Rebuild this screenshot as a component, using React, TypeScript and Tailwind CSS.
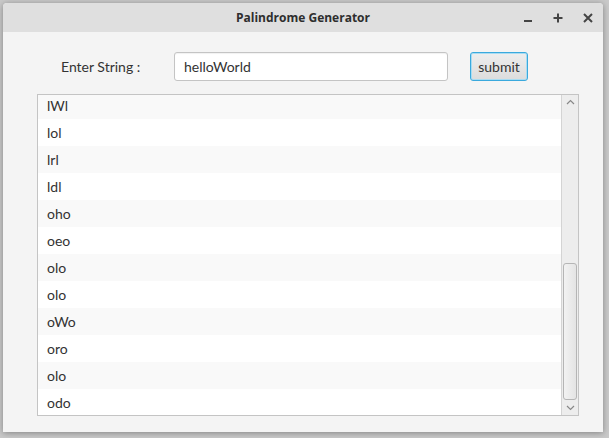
import React from "react";

const items = ["lWl", "lol", "lrl", "ldl", "oho", "oeo", "olo", "olo", "oWo", "oro", "olo", "odo"];

const App: React.FC = () => {
  return (
    <div className="w-[609px] h-[438px] bg-[#c9c9c9] overflow-hidden pt-[3px] pl-[3px]" style={{ fontFamily: "Lato, 'Open Sans', sans-serif" }}>
      <div className="w-[600px] h-[429px] bg-[#f4f4f4] rounded-t-[4px] shadow-[0_1px_6px_rgba(0,0,0,0.35)] flex flex-col">
        {/* title bar */}
        <div className="h-[29px] bg-[#dfdfdf] rounded-t-[4px] flex items-center relative">
          <div className="flex-1 text-center text-[12px] font-bold text-[#2e2e2e]" style={{ fontFamily: "'Open Sans', sans-serif" }}>
            Palindrome Generator
          </div>
          <div className="absolute right-[9px] top-0 h-full flex items-center gap-[18px] text-[#444]">
            <svg width="12" height="12" viewBox="0 0 12 12"><rect x="2" y="8" width="8" height="2" fill="#444" /></svg>
            <svg width="12" height="12" viewBox="0 0 12 12"><path d="M6 1.5v9M1.5 6h9" stroke="#444" strokeWidth="2" /></svg>
            <svg width="12" height="12" viewBox="0 0 12 12"><path d="M2 2l8 8M10 2l-8 8" stroke="#444" strokeWidth="2" /></svg>
          </div>
        </div>
        {/* form */}
        <div className="flex items-center mt-[20px] h-[29px]">
          <span className="ml-[58px] w-[113px] text-[14px] text-[#333]">Enter String :</span>
          <div className="w-[274px] h-[29px] bg-white border border-[#c4c4c4] rounded-[3px] flex items-center pl-[9px] text-[14px] text-[#333] shadow-[inset_0_1px_1px_rgba(0,0,0,0.06)]">
            helloWorld
          </div>
          <button className="ml-[22px] w-[58px] h-[29px] rounded-[3px] border border-[#3aa9dd] bg-gradient-to-b from-[#eeeeee] to-[#dcdcdc] text-[14px] text-[#333] shadow-[inset_0_0_0_1px_#a9dcf2]">
            submit
          </button>
        </div>
        {/* list */}
        <div className="mt-[13px] ml-[34px] w-[542px] h-[322px] border border-[#c4c4c4] bg-white flex overflow-hidden">
          <div className="flex-1 overflow-hidden">
            <div className="-mt-[3px]">
              {items.map((it, i) => (
                <div
                  key={i}
                  className={`h-[27px] flex items-center pl-[9px] text-[14px] text-[#333] ${i % 2 === 0 ? "bg-[#f9f9f9]" : "bg-white"}`}
                >
                  {it}
                </div>
              ))}
            </div>
          </div>
          <div className="w-[17px] bg-[#ededed] border-l border-[#d4d4d4] flex flex-col items-center">
            <div className="h-[13px] flex items-center justify-center">
              <svg width="9" height="6" viewBox="0 0 9 6"><path d="M1 5l3.5-3.5L8 5" stroke="#888" strokeWidth="1.2" fill="none" /></svg>
            </div>
            <div className="flex-1 w-full relative">
              <div className="absolute left-[1px] right-[1px] top-[155px] bottom-[1px] rounded-[3px] border border-[#b5b5b5] bg-gradient-to-r from-[#f2f2f2] to-[#e4e4e4]" />
            </div>
            <div className="h-[14px] flex items-center justify-center">
              <svg width="9" height="6" viewBox="0 0 9 6"><path d="M1 1l3.5 3.5L8 1" stroke="#888" strokeWidth="1.2" fill="none" /></svg>
            </div>
          </div>
        </div>
      </div>
    </div>
  );
};

export default App;
